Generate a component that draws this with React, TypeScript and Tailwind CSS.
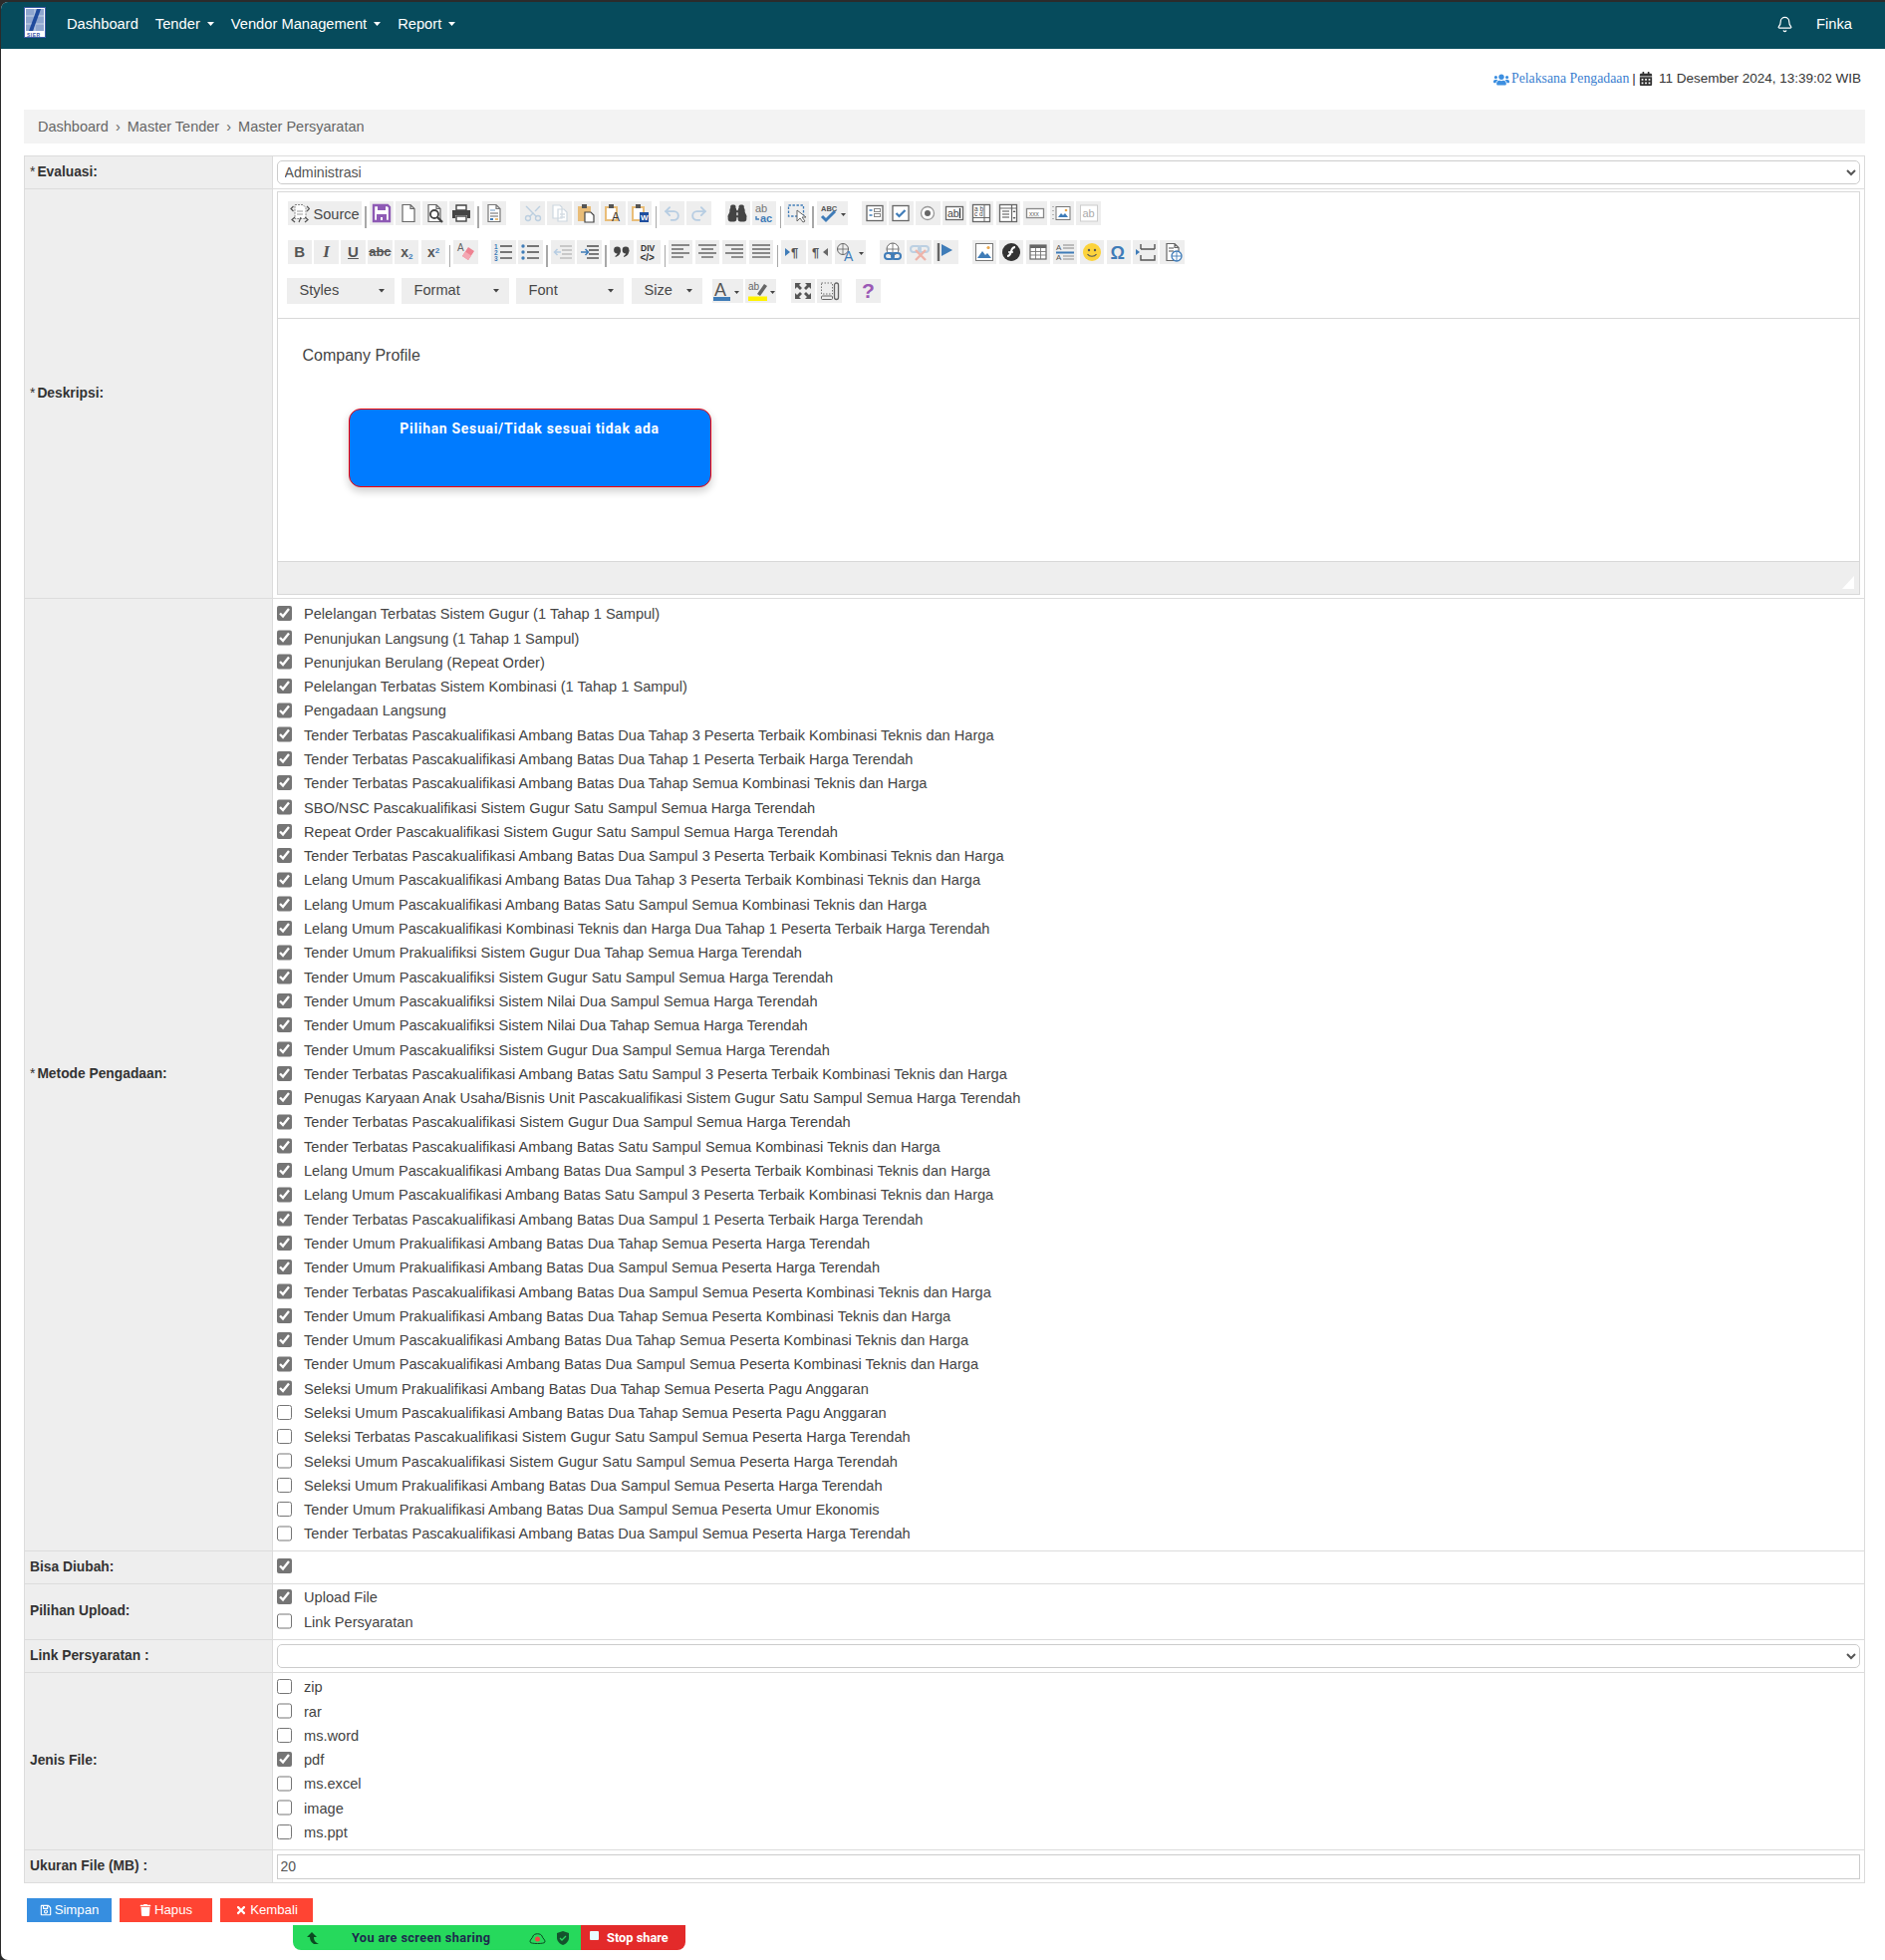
import React from 'react';
import { Bell, Binoculars, Redo2, Scissors, Undo2 } from 'lucide-react';
import { FaCalendarAlt, FaRegSave, FaTimes, FaTrash, FaUsers } from 'react-icons/fa';

const dark = '#4d4d4d';
const blue = '#3f7cb8';
const pale = '#b7cde2';

const metode: [string, boolean][] = [
  ['Pelelangan Terbatas Sistem Gugur (1 Tahap 1 Sampul)', true],
  ['Penunjukan Langsung (1 Tahap 1 Sampul)', true],
  ['Penunjukan Berulang (Repeat Order)', true],
  ['Pelelangan Terbatas Sistem Kombinasi (1 Tahap 1 Sampul)', true],
  ['Pengadaan Langsung', true],
  ['Tender Terbatas Pascakualifikasi Ambang Batas Dua Tahap 3 Peserta Terbaik Kombinasi Teknis dan Harga', true],
  ['Tender Terbatas Pascakualifikasi Ambang Batas Dua Tahap 1 Peserta Terbaik Harga Terendah', true],
  ['Tender Terbatas Pascakualifikasi Ambang Batas Dua Tahap Semua Kombinasi Teknis dan Harga', true],
  ['SBO/NSC Pascakualifikasi Sistem Gugur Satu Sampul Semua Harga Terendah', true],
  ['Repeat Order Pascakualifikasi Sistem Gugur Satu Sampul Semua Harga Terendah', true],
  ['Tender Terbatas Pascakualifikasi Ambang Batas Dua Sampul 3 Peserta Terbaik Kombinasi Teknis dan Harga', true],
  ['Lelang Umum Pascakualifikasi Ambang Batas Dua Tahap 3 Peserta Terbaik Kombinasi Teknis dan Harga', true],
  ['Lelang Umum Pascakualifikasi Ambang Batas Satu Sampul Semua Kombinasi Teknis dan Harga', true],
  ['Lelang Umum Pascakualifikasi Kombinasi Teknis dan Harga Dua Tahap 1 Peserta Terbaik Harga Terendah', true],
  ['Tender Umum Prakualifiksi Sistem Gugur Dua Tahap Semua Harga Terendah', true],
  ['Tender Umum Pascakualifiksi Sistem Gugur Satu Sampul Semua Harga Terendah', true],
  ['Tender Umum Pascakualifiksi Sistem Nilai Dua Sampul Semua Harga Terendah', true],
  ['Tender Umum Pascakualifiksi Sistem Nilai Dua Tahap Semua Harga Terendah', true],
  ['Tender Umum Pascakualifiksi Sistem Gugur Dua Sampul Semua Harga Terendah', true],
  ['Tender Terbatas Pascakualifikasi Ambang Batas Satu Sampul 3 Peserta Terbaik Kombinasi Teknis dan Harga', true],
  ['Penugas Karyaan Anak Usaha/Bisnis Unit Pascakualifikasi Sistem Gugur Satu Sampul Semua Harga Terendah', true],
  ['Tender Terbatas Pascakualifikasi Sistem Gugur Dua Sampul Semua Harga Terendah', true],
  ['Tender Terbatas Pascakualifikasi Ambang Batas Satu Sampul Semua Kombinasi Teknis dan Harga', true],
  ['Lelang Umum Pascakualifikasi Ambang Batas Dua Sampul 3 Peserta Terbaik Kombinasi Teknis dan Harga', true],
  ['Lelang Umum Pascakualifikasi Ambang Batas Satu Sampul 3 Peserta Terbaik Kombinasi Teknis dan Harga', true],
  ['Tender Terbatas Pascakualifikasi Ambang Batas Dua Sampul 1 Peserta Terbaik Harga Terendah', true],
  ['Tender Umum Prakualifikasi Ambang Batas Dua Tahap Semua Peserta Harga Terendah', true],
  ['Tender Umum Prakualifikasi Ambang Batas Dua Sampul Semua Peserta Harga Terendah', true],
  ['Tender Terbatas Pascakualifikasi Ambang Batas Dua Sampul Semua Peserta Kombinasi Teknis dan Harga', true],
  ['Tender Umum Prakualifikasi Ambang Batas Dua Tahap Semua Peserta Kombinasi Teknis dan Harga', true],
  ['Tender Umum Pascakualifikasi Ambang Batas Dua Tahap Semua Peserta Kombinasi Teknis dan Harga', true],
  ['Tender Umum Pascakualifikasi Ambang Batas Dua Sampul Semua Peserta Kombinasi Teknis dan Harga', true],
  ['Seleksi Umum Prakualifikasi Ambang Batas Dua Tahap Semua Peserta Pagu Anggaran', true],
  ['Seleksi Umum Pascakualifikasi Ambang Batas Dua Tahap Semua Peserta Pagu Anggaran', false],
  ['Seleksi Terbatas Pascakualifikasi Sistem Gugur Satu Sampul Semua Peserta Harga Terendah', false],
  ['Seleksi Umum Pascakualifikasi Sistem Gugur Satu Sampul Semua Peserta Harga Terendah', false],
  ['Seleksi Umum Prakualifikasi Ambang Batas Dua Sampul Semua Peserta Harga Terendah', false],
  ['Tender Umum Prakualifikasi Ambang Batas Dua Sampul Semua Peserta Umur Ekonomis', false],
  ['Tender Terbatas Pascakualifikasi Ambang Batas Dua Sampul Semua Peserta Harga Terendah', false],
];

const jenisFile: [string, boolean][] = [
  ['zip', false],
  ['rar', false],
  ['ms.word', false],
  ['pdf', true],
  ['ms.excel', false],
  ['image', false],
  ['ms.ppt', false],
];

const Lines = ({ rows, color = dark }: { rows: number[][]; color?: string }) => (
  <>
    {rows.map(([x1, x2, y], i) => (
      <path key={i} d={`M${x1} ${y}H${x2}`} stroke={color} strokeWidth="1.4" />
    ))}
  </>
);

const Doc = ({ color = dark }: { color?: string }) => (
  <path d="M4 1.5h8l4 4v13H4z M12 1.5v4h4" fill="#fff" stroke={color} strokeWidth="1.2" />
);

const Clip = () => (
  <>
    <rect x="2" y="3" width="13" height="15" fill="#e9bd78" />
    <rect x="6" y="1" width="5" height="4" fill="#555" />
  </>
);

const Svg = ({ children, w = 20 }: { children: React.ReactNode; w?: number }) => (
  <svg width={w} height="20" viewBox={`0 0 ${w} 20`} fontFamily="Liberation Sans, sans-serif">
    {children}
  </svg>
);

const icons: Record<string, React.ReactNode> = {
  save: (
    <Svg>
      <path d="M2 2h14l2 2v14H2z" fill="#fff" stroke="#8e5ab5" strokeWidth="2.4" />
      <rect x="6" y="2" width="8" height="5" fill="#8e5ab5" />
      <rect x="5" y="11" width="10" height="7" fill="#8e5ab5" />
      <rect x="9" y="14" width="2" height="3" fill="#fff" />
    </Svg>
  ),
  newpage: (
    <Svg>
      <Doc color="#666" />
    </Svg>
  ),
  preview: (
    <Svg>
      <Doc color="#666" />
      <circle cx="10" cy="11" r="4" fill="#fff" stroke="#444" strokeWidth="1.8" />
      <path d="M13 14l5 5" stroke="#444" strokeWidth="2.4" />
    </Svg>
  ),
  print: (
    <Svg>
      <path d="M5 2h10v5H5z" fill="#fff" stroke="#444" strokeWidth="1.4" />
      <path d="M1 7h18v8h-3v-3H4v3H1z" fill="#444" />
      <rect x="5" y="13" width="10" height="5" fill="#fff" stroke="#444" strokeWidth="1.4" />
    </Svg>
  ),
  templates: (
    <Svg>
      <Doc color="#777" />
      <rect x="6" y="6" width="5" height="2" fill={pale} />
      <Lines rows={[[6, 14, 10], [6, 14, 13]]} color="#999" />
      <rect x="6" y="15" width="3" height="2" fill={blue} />
      <rect x="11" y="15" width="3" height="2" fill="#e9bd78" />
    </Svg>
  ),
  cut: (
    <span className="flex rotate-[-90deg] text-[#bccfe0]">
      <Scissors size={20} strokeWidth={1.6} />
    </span>
  ),
  copy: (
    <Svg>
      <path d="M3 2h7l2 2v11H3z M8 6h6l3 3v9H8z" fill="#fff" stroke="#cdd7e0" strokeWidth="1.2" />
      <Lines rows={[[10, 15, 11], [10, 15, 14]]} color="#d5dde5" />
    </Svg>
  ),
  paste: (
    <Svg>
      <Clip />
      <path d="M9 9h6l3 3v7H9z" fill="#fff" stroke="#444" strokeWidth="1.2" />
    </Svg>
  ),
  pastetext: (
    <Svg>
      <Clip />
      <rect x="4" y="5" width="9" height="11" fill="#fff" />
      <text x="9" y="18" fontSize="12" fill="#333">A</text>
    </Svg>
  ),
  pasteword: (
    <Svg>
      <Clip />
      <rect x="4" y="5" width="9" height="11" fill="#fff" />
      <rect x="10" y="9" width="9" height="10" fill="#1f4e9e" />
      <text x="11" y="17" fontSize="8" fontWeight="700" fill="#fff">W</text>
    </Svg>
  ),
  undo: (
    <span className="flex text-[#b7cde2]">
      <Undo2 size={19} strokeWidth={2.4} />
    </span>
  ),
  redo: (
    <span className="flex text-[#b7cde2]">
      <Redo2 size={19} strokeWidth={2.4} />
    </span>
  ),
  find: (
    <span className="flex text-[#444]">
      <Binoculars size={20} strokeWidth={2.4} fill="#444" />
    </span>
  ),
  replace: (
    <Svg>
      <text x="1" y="9" fontSize="11" fill="#777">ab</text>
      <text x="6" y="18.500" fontSize="11" fontWeight="700" fill={blue}>ac</text>
      <path d="M2 13v3h3" fill="none" stroke={blue} strokeWidth="1.4" />
    </Svg>
  ),
  selectall: (
    <Svg>
      <rect x="1.5" y="2" width="15" height="11" fill="none" stroke={blue} strokeWidth="1.3" strokeDasharray="2.4 1.6" />
      <path d="M10 7v11l3-3 3 4 2-1-3-4h4z" fill="#fff" stroke="#666" />
    </Svg>
  ),
  spell: (
    <Svg w={29}>
      <text x="3" y="8" fontSize="7.5" fontWeight="700" fill="#555">ABC</text>
      <path d="M4 13l4 4 9-9" fill="none" stroke={blue} strokeWidth="3" />
      <path d="M23 10h5l-2.500 3z" fill="#444" />
    </Svg>
  ),
  form: (
    <Svg>
      <rect x="2" y="2.500" width="16" height="15" fill="#fff" stroke="#666" strokeWidth="1.3" />
      <path d="M4.500 7h3M4.500 12h3" stroke={blue} strokeWidth="1.6" />
      <rect x="9.500" y="5.500" width="6" height="3" fill="none" stroke="#888" />
      <rect x="9.500" y="10.500" width="6" height="3" fill="none" stroke="#888" />
    </Svg>
  ),
  checkbox: (
    <Svg>
      <rect x="2" y="2.500" width="16" height="15" fill="#fff" stroke="#666" strokeWidth="1.3" />
      <path d="M5.500 10l3 3 6-6" fill="none" stroke={blue} strokeWidth="2.2" />
    </Svg>
  ),
  radio: (
    <Svg>
      <circle cx="10" cy="10" r="6.500" fill="#fff" stroke="#999" strokeWidth="1.3" />
      <circle cx="10" cy="10" r="3" fill="#666" />
    </Svg>
  ),
  textfield: (
    <Svg>
      <rect x="1.500" y="3.500" width="17" height="13" fill="#fff" stroke="#666" strokeWidth="1.3" />
      <text x="3" y="14" fontSize="10.500" fill="#444">ab</text>
      <path d="M15.500 5v10" stroke="#333" strokeWidth="1.3" />
    </Svg>
  ),
  textarea: (
    <Svg>
      <rect x="1.500" y="1.500" width="17" height="17" fill="#fff" stroke="#666" strokeWidth="1.3" />
      <text x="3" y="7.500" fontSize="6.500" fill="#444">a b</text>
      <text x="3" y="13" fontSize="6.500" fill="#444">c d</text>
      <path d="M13 2v16M2 14.500h16" stroke="#666" />
    </Svg>
  ),
  select: (
    <Svg>
      <rect x="1.500" y="1.500" width="17" height="17" fill="#fff" stroke="#666" strokeWidth="1.3" />
      <path d="M2 5h16M13.500 2v16" stroke="#666" strokeWidth="1.2" />
      <Lines rows={[[4, 11, 8], [4, 11, 11], [4, 11, 14]]} color="#888" />
      <path d="M14.500 9l1.500-2 1.500 2zM14.500 14l1.500 2 1.500-2z" fill="#555" />
    </Svg>
  ),
  button: (
    <Svg>
      <rect x="1.500" y="5.500" width="17" height="9" fill="#fff" stroke="#888" strokeWidth="1.3" />
      <text x="4" y="12.500" fontSize="6.500" fill="#666">xxx</text>
    </Svg>
  ),
  imagebutton: (
    <Svg>
      <path d="M1 3v1M1 7v1M1 11v1M1 15v1" stroke="#777" />
      <rect x="4" y="3.500" width="14" height="13" fill="#fff" stroke="#777" />
      <path d="M6 14l3-4 2 2 2-2 3 4z" fill={blue} />
      <circle cx="14" cy="7" r="1.300" fill="#e9a64c" />
    </Svg>
  ),
  hidden: (
    <Svg>
      <rect x="1.500" y="2" width="17" height="16" fill="#fff" stroke="#ccc" />
      <text x="3.500" y="14" fontSize="11" fill="#aaa">ab</text>
    </Svg>
  ),
  removeformat: (
    <Svg>
      <text x="1" y="9" fontSize="10" fill="#666">A</text>
      <path d="M12 5l6 4-6 9-6-4z" fill="#ee8291" />
      <path d="M6 14l3-4.500 6 4L12 18z" fill="#f4a7b2" />
    </Svg>
  ),
  ol: (
    <Svg>
      <text x="1" y="7" fontSize="6.500" fontWeight="700" fill={blue}>1</text>
      <text x="1" y="13" fontSize="6.500" fontWeight="700" fill={blue}>2</text>
      <text x="1" y="19" fontSize="6.500" fontWeight="700" fill={blue}>3</text>
      <Lines rows={[[7, 19, 4], [7, 19, 10], [7, 19, 16]]} />
    </Svg>
  ),
  ul: (
    <Svg>
      <circle cx="3" cy="4" r="1.700" fill={blue} />
      <circle cx="3" cy="10" r="1.700" fill={blue} />
      <circle cx="3" cy="16" r="1.700" fill={blue} />
      <Lines rows={[[7, 19, 4], [7, 19, 10], [7, 19, 16]]} />
    </Svg>
  ),
  outdent: (
    <Svg>
      <Lines rows={[[7, 19, 4], [9, 19, 8], [9, 19, 12], [7, 19, 16]]} color="#bbb" />
      <path d="M8 10H2M4.500 7L1.500 10l3 3" fill="none" stroke={pale} strokeWidth="1.500" />
    </Svg>
  ),
  indent: (
    <Svg>
      <Lines rows={[[7, 19, 4], [9, 19, 8], [9, 19, 12], [7, 19, 16]]} />
      <path d="M1 10h7M5.500 7l3 3-3 3" fill="none" stroke={blue} strokeWidth="1.500" />
    </Svg>
  ),
  quote: (
    <Svg>
      <circle cx="5.500" cy="8" r="3.400" fill="#444" />
      <circle cx="14" cy="8" r="3.400" fill="#444" />
      <path d="M8.900 8c0 4-2 6-5 7l-.6-1c2-1 2.700-3 2.700-5zM17.400 8c0 4-2 6-5 7l-.6-1c2-1 2.700-3 2.700-5z" fill="#444" />
    </Svg>
  ),
  div: (
    <Svg>
      <text x="2" y="9" fontSize="8.500" fontWeight="700" fill="#333">DIV</text>
      <text x="1.500" y="18.500" fontSize="10" fontWeight="700" fill="#333">{'</>'}</text>
    </Svg>
  ),
  left: (
    <Svg>
      <Lines rows={[[1, 19, 3], [1, 13, 7], [1, 19, 11], [1, 13, 15]]} color="#666" />
    </Svg>
  ),
  center: (
    <Svg>
      <Lines rows={[[1, 19, 3], [4, 16, 7], [1, 19, 11], [4, 16, 15]]} color="#666" />
    </Svg>
  ),
  right: (
    <Svg>
      <Lines rows={[[1, 19, 3], [7, 19, 7], [1, 19, 11], [7, 19, 15]]} color="#666" />
    </Svg>
  ),
  justify: (
    <Svg>
      <Lines rows={[[1, 19, 3], [1, 19, 7], [1, 19, 11], [1, 19, 15]]} color="#666" />
    </Svg>
  ),
  ltr: (
    <Svg>
      <path d="M2 6l5 4-5 4z" fill={blue} />
      <text x="8" y="15" fontSize="13" fontWeight="700" fill="#555">¶</text>
    </Svg>
  ),
  rtl: (
    <Svg>
      <text x="2" y="15" fontSize="13" fontWeight="700" fill="#555">¶</text>
      <path d="M18 6l-5 4 5 4z" fill="#666" />
    </Svg>
  ),
  lang: (
    <Svg w={29}>
      <circle cx="7" cy="7" r="5.500" fill="none" stroke="#666" />
      <path d="M7 1.500v11M1.500 7h11" stroke="#666" strokeWidth=".8" />
      <text x="8" y="18.500" fontSize="14" fill={blue}>A</text>
      <path d="M23 10h5l-2.500 3z" fill="#444" />
    </Svg>
  ),
  link: (
    <Svg>
      <circle cx="10" cy="7" r="6" fill="#fff" stroke="#666" />
      <path d="M10 1v12M4 7h12" stroke="#666" strokeWidth=".8" />
      <rect x="2" y="11" width="9" height="6" rx="3" fill="none" stroke={blue} strokeWidth="2" />
      <rect x="9" y="11" width="9" height="6" rx="3" fill="none" stroke={blue} strokeWidth="2" />
    </Svg>
  ),
  unlink: (
    <Svg>
      <rect x="1" y="4" width="10" height="6" rx="3" fill="none" stroke="#bcd0e2" strokeWidth="2" />
      <rect x="9" y="4" width="10" height="6" rx="3" fill="none" stroke="#bcd0e2" strokeWidth="2" />
      <path d="M6 8l10 10M16 8L6 18" stroke="#eeb4aa" strokeWidth="2.400" />
    </Svg>
  ),
  anchor: (
    <Svg>
      <path d="M3 1v18" stroke="#666" strokeWidth="2.400" />
      <path d="M6 2l11 6-11 6z" fill={blue} />
    </Svg>
  ),
  image: (
    <Svg>
      <rect x="1.500" y="1.500" width="17" height="17" fill="#fff" stroke="#777" />
      <path d="M3 16l5-7 3 4 2-2 4 5z" fill={blue} />
      <circle cx="14" cy="5.500" r="1.600" fill="#e9a64c" />
    </Svg>
  ),
  flash: (
    <Svg>
      <circle cx="10" cy="10" r="9" fill="#333" />
      <path d="M6 14c3 0 3-2 4-5s2-4 4-4" fill="none" stroke="#fff" strokeWidth="2" />
      <path d="M7 10h5" stroke="#fff" strokeWidth="1.500" />
    </Svg>
  ),
  table: (
    <Svg>
      <rect x="2" y="3" width="16" height="14" fill="#fff" stroke="#666" strokeWidth="1.200" />
      <rect x="2" y="3" width="16" height="3" fill="#666" />
      <path d="M7.500 6v11M12.500 6v11M2 9.500h16M2 13h16" stroke="#777" strokeWidth=".9" />
    </Svg>
  ),
  hr: (
    <Svg>
      <text x="1" y="8" fontSize="8" fill="#555">A</text>
      <text x="1" y="18" fontSize="8" fill="#555">A</text>
      <Lines rows={[[8, 19, 3], [8, 19, 6], [8, 19, 14], [8, 19, 17]]} color="#aaa" />
      <path d="M1 10.500h18" stroke={blue} strokeWidth="2" />
    </Svg>
  ),
  smiley: (
    <Svg>
      <circle cx="10" cy="10" r="9" fill="#fcd33c" />
      <circle cx="7" cy="8" r="1.200" fill="#555" />
      <circle cx="13" cy="8" r="1.200" fill="#555" />
      <path d="M5.500 12c2 3 7 3 9 0" fill="none" stroke="#555" strokeWidth="1.200" />
    </Svg>
  ),
  omega: (
    <Svg>
      <text x="1.500" y="17" fontSize="18" fontWeight="700" fill={blue}>Ω</text>
    </Svg>
  ),
  pagebreak: (
    <Svg>
      <path d="M5 7V2M19 7V2M5 13v5h14v-5" fill="none" stroke="#555" strokeWidth="1.400" />
      <path d="M5 7h14" stroke="#555" strokeWidth="1.400" />
      <path d="M0 7l4 3-4 3z" fill={blue} />
    </Svg>
  ),
  iframe: (
    <Svg>
      <Doc color="#666" />
      <Lines rows={[[6, 11, 6], [6, 11, 9]]} color="#888" />
      <circle cx="14" cy="14" r="5" fill="#fff" stroke={blue} strokeWidth="1.300" />
      <path d="M14 9v10M9 14h10" stroke={blue} strokeWidth=".9" />
    </Svg>
  ),
  fontcolor: (
    <Svg w={28}>
      <text x="1" y="15" fontSize="18" fill="#555">A</text>
      <rect x="0" y="16" width="17" height="4" fill={blue} />
      <path d="M21 10h5l-2.500 3z" fill="#444" />
    </Svg>
  ),
  bgcolor: (
    <Svg w={28}>
      <text x="1" y="9" fontSize="10" fill="#666">ab</text>
      <path d="M10 13l7-10 3 2-7 10z" fill="#666" />
      <rect x="1" y="15.500" width="19" height="4.500" fill="#fff200" />
      <path d="M23 10h5l-2.500 3z" fill="#444" />
    </Svg>
  ),
  maximize: (
    <Svg>
      <path d="M2 2h6L6 4l3 3-2 2-3-3-2 2zM18 2v6l-2-2-3 3-2-2 3-3-2-2zM2 18v-6l2 2 3-3 2 2-3 3 2 2zM18 18h-6l2-2-3-3 2-2 3 3 2-2z" fill="#555" />
    </Svg>
  ),
  showblocks: (
    <Svg>
      <rect x="1.500" y="2" width="11" height="11" fill="none" stroke="#777" strokeDasharray="1.500 1.500" />
      <rect x="1.500" y="15" width="11" height="3.500" rx="1" fill="none" stroke="#666" />
      <rect x="14.500" y="2" width="4" height="16.500" rx="2" fill="none" stroke="#666" strokeWidth="1.300" />
    </Svg>
  ),
  help: <span className="text-[21px] leading-6 font-bold text-[#9b59b6]">?</span>,
};

const Btn = ({ name, wide }: { name: string; wide?: boolean }) => (
  <span
    className={`mr-[2.5px] flex h-6 shrink-0 items-center justify-center bg-[#eeeeee] ${
      wide ? 'w-[31px]' : 'w-[24.4px]'
    }`}
  >
    {icons[name]}
  </span>
);

const TextBtn = ({ children }: { children: React.ReactNode }) => (
  <span className="mr-[2.5px] flex h-6 w-[24.4px] shrink-0 items-center justify-center bg-[#eeeeee] text-[#555]">
    {children}
  </span>
);

const Sep = () => <span className="mt-[4.5px] mr-[3px] ml-px h-[22px] w-[1.5px] shrink-0 bg-[#a8a8a8]" />;
const Gap = ({ narrow }: { narrow?: boolean }) => <span className={`shrink-0 ${narrow ? 'w-[11px]' : 'w-3'}`} />;

const Combo = ({ label, width }: { label: string; width: string }) => (
  <span className={`flex h-[26px] shrink-0 items-center justify-between bg-[#eeeeee] pr-2.5 pl-[13px] text-[14.6px] text-[#484848] ${width}`}>
    {label}
    <svg width="6" height="4" viewBox="0 0 6 4">
      <path d="M0 0h6L3 3.500z" fill="#444" />
    </svg>
  </span>
);

const Check = ({ on }: { on: boolean }) => (
  <input
    type="checkbox"
    checked={on}
    readOnly
    className="m-0 -mt-[3px] h-[15.5px] w-[15.5px] shrink-0 accent-[#757575]"
  />
);

const CheckItem = ({ label, on }: { label: string; on: boolean }) => (
  <label className="flex h-[24.3px] items-center gap-3 text-[14.6px] text-[#444]">
    <Check on={on} />
    <span>{label}</span>
  </label>
);

const Row = ({
  label,
  required,
  children,
}: {
  label: string;
  required?: boolean;
  children: React.ReactNode;
}) => (
  <div className="flex border-b border-[#dcdcdc] last:border-b-0">
    <div className="flex w-[249px] shrink-0 items-center border-r border-[#dcdcdc] bg-[#eeeeee] pl-[5px] text-[13.8px] font-bold text-[#333]">
      {required && <span className="mr-[2px] font-normal">*</span>}
      {label}
    </div>
    <div className="min-w-0 flex-1 pr-[4.5px] pl-[3.5px]">{children}</div>
  </div>
);

const NavItem = ({ label, caret }: { label: string; caret?: boolean }) => (
  <span className="flex items-center gap-[7px] text-white">
    {label}
    {caret && (
      <svg width="7" height="4" viewBox="0 0 7 4">
        <path d="M0 0h7L3.500 4z" fill="#fff" />
      </svg>
    )}
  </span>
);

const App: React.FC = () => {
  return (
    <div className="min-h-[1967px] bg-[#2b2b2b] pt-[2px] pl-px font-['Liberation_Sans',Arial,sans-serif]">
      <div className="min-h-[1965px] overflow-hidden rounded-l-[7px] bg-white">
        <nav className="flex h-[47px] items-center bg-[#064b5c] pr-[33px] pb-[2px] pl-[23px] text-[14.7px]">
          <svg width="22" height="31" viewBox="0 0 22 31" className="mr-[21px] -mt-[4px] shrink-0">
            <rect x=".5" y=".5" width="21" height="30" fill="#fff" stroke="#3b5aa6" />
            <rect x="2" y="2" width="18" height="22" fill="#8fa6cf" />
            <path d="M2 9h18M2 17h18M11 2v22" stroke="#c5d2e6" />
            <path d="M13 2h4L9 24H5z" fill="#1f4a9c" />
            <text x="3" y="29.500" fontSize="5" fontWeight="700" fill="#3b5aa6" letterSpacing=".5">SIER</text>
          </svg>
          <div className="flex items-center gap-[17px]">
            <NavItem label="Dashboard" />
            <NavItem label="Tender" caret />
            <NavItem label="Vendor Management" caret />
            <NavItem label="Report" caret />
          </div>
          <div className="ml-auto flex items-center gap-[23px] text-white">
            <Bell size={17} strokeWidth={1.7} />
            <span>Finka</span>
          </div>
        </nav>

        <div className="flex h-[61px] items-center justify-end pr-[24px] text-[13.5px] text-[#333]">
          <FaUsers className="mr-[2px] text-[16px] text-[#3d8fe0]" />
          <span className="font-['Liberation_Serif',serif] text-[13.8px] text-[#3d7fd0]">Pelaksana Pengadaan</span>
          <span className="mx-[3px]">|</span>
          <FaCalendarAlt className="mr-[6px] -mt-0.5 text-[14px] text-[#333]" />
          <span>11 Desember 2024, 13:39:02 WIB</span>
        </div>

        <div className="mr-5 ml-[23px] flex h-[34px] items-center gap-[7px] bg-[#f3f3f3] pt-px pl-[14px] text-[14.5px] text-[#666]">
          <span>Dashboard</span>
          <span>›</span>
          <span>Master Tender</span>
          <span>›</span>
          <span>Master Persyaratan</span>
        </div>

        <div className="mt-3 mr-5 ml-[23px] border border-[#dcdcdc]">
          <Row label="Evaluasi:" required>
            <div className="flex h-[32px] items-center">
              <select className="h-6 w-full rounded-[5px] border-[1.5px] border-[#cccccc] pl-[3px] text-[14.2px] text-[#555]">
                <option>Administrasi</option>
              </select>
            </div>
          </Row>

          <Row label="Deskripsi:" required>
            <div className="flex h-[410px] flex-col pt-[2px] pb-[3px]">
              <div className="flex flex-1 flex-col border border-[#d8d8d8]">
                <div className="border-b border-[#d8d8d8] px-[10px] pt-[9px] pb-[14px]">
                  <div className="flex h-6 items-start">
                    <span className="mr-[2.5px] flex h-6 w-[74px] shrink-0 items-center gap-1 bg-[#eeeeee] pl-[2px] text-[14.6px] text-[#484848]">
                      <Svg>
                        <path d="M5 1.500h8l3 3v11H5z" fill="#fff" stroke="#888" strokeDasharray="2 1" />
                        <path d="M3.500 3L1 5.500l2.500 2.500M17 3l2.500 2.500L17 8M5 19l-3-2.500L5 14M15 19l3-2.500-3-2.500M9 19l2-5" fill="none" stroke="#555" strokeWidth="1.200" />
                        <path d="M7 8h6M7 11h6" stroke="#999" />
                      </Svg>
                      <span className="pt-[3px]">Source</span>
                    </span>
                    <Sep />
                    <Btn name="save" />
                    <Btn name="newpage" />
                    <Btn name="preview" />
                    <Btn name="print" />
                    <Sep />
                    <Btn name="templates" />
                    <Gap />
                    <Btn name="cut" />
                    <Btn name="copy" />
                    <Btn name="paste" />
                    <Btn name="pastetext" />
                    <Btn name="pasteword" />
                    <Sep />
                    <Btn name="undo" />
                    <Btn name="redo" />
                    <Gap />
                    <Btn name="find" />
                    <Btn name="replace" />
                    <Sep />
                    <Btn name="selectall" />
                    <Sep />
                    <Btn name="spell" wide />
                    <Gap />
                    <Btn name="form" />
                    <Btn name="checkbox" />
                    <Btn name="radio" />
                    <Btn name="textfield" />
                    <Btn name="textarea" />
                    <Btn name="select" />
                    <Btn name="button" />
                    <Btn name="imagebutton" />
                    <Btn name="hidden" />
                  </div>

                  <div className="mt-[15px] flex h-6 items-start">
                    <TextBtn><b className="text-[15px]">B</b></TextBtn>
                    <TextBtn><i className="font-['Liberation_Serif',serif] text-[17px] font-bold">I</i></TextBtn>
                    <TextBtn><u className="text-[15px] font-bold">U</u></TextBtn>
                    <TextBtn><s className="text-[13px] font-bold">abc</s></TextBtn>
                    <TextBtn><b className="text-[14px]">x<sub className="text-[8px] text-[#3f7cb8]">2</sub></b></TextBtn>
                    <TextBtn><b className="text-[14px]">x<sup className="text-[8px] text-[#3f7cb8]">2</sup></b></TextBtn>
                    <Sep />
                    <Btn name="removeformat" />
                    <Gap narrow />
                    <Btn name="ol" />
                    <Btn name="ul" />
                    <Sep />
                    <Btn name="outdent" />
                    <Btn name="indent" />
                    <Sep />
                    <Btn name="quote" />
                    <Btn name="div" />
                    <Sep />
                    <Btn name="left" />
                    <Btn name="center" />
                    <Btn name="right" />
                    <Btn name="justify" />
                    <Sep />
                    <Btn name="ltr" />
                    <Btn name="rtl" />
                    <Btn name="lang" wide />
                    <Gap />
                    <Btn name="link" />
                    <Btn name="unlink" />
                    <Btn name="anchor" />
                    <Gap />
                    <Btn name="image" />
                    <Btn name="flash" />
                    <Btn name="table" />
                    <Btn name="hr" />
                    <Btn name="smiley" />
                    <Btn name="omega" />
                    <Btn name="pagebreak" />
                    <Btn name="iframe" />
                  </div>

                  <div className="mt-[14px] flex items-center">
                    <span className="mr-[7px] -ml-px"><Combo label="Styles" width="w-[108px]" /></span>
                    <span className="mr-[7px]"><Combo label="Format" width="w-[108px]" /></span>
                    <span className="mr-[8px]"><Combo label="Font" width="w-[108px]" /></span>
                    <span className="mr-[10px]"><Combo label="Size" width="w-[71px]" /></span>
                    <Btn name="fontcolor" wide />
                    <Btn name="bgcolor" wide />
                    <Gap />
                    <Btn name="maximize" />
                    <Btn name="showblocks" />
                    <Gap />
                    <Btn name="help" />
                  </div>
                </div>

                <div className="flex-1 pt-[27px] pl-[25px]">
                  <p className="text-[16px] leading-5 text-[#444]">Company Profile</p>
                  <div className="mt-[43px] ml-[46px] h-[79px] w-[364px] rounded-[12px] border-[1.5px] border-[#ff0000] bg-[#007bff] pt-[9px] text-center font-['Roboto',sans-serif] text-[14px] font-bold tracking-[0.68px] text-white shadow-[0_4px_8px_rgba(0,0,0,0.2)]">
                    Pilihan Sesuai/Tidak sesuai tidak ada
                  </div>
                </div>

                <div className="flex h-[33px] items-end justify-end border-t border-[#d8d8d8] bg-[#eeeeee] pr-[5px] pb-[5px]">
                  <svg width="12" height="13" viewBox="0 0 12 13">
                    <path d="M12 0v13H0z" fill="#fff" />
                  </svg>
                </div>
              </div>
            </div>
          </Row>

          <Row label="Metode Pengadaan:" required>
            <div className="pt-1 pb-[3.5px]">
              {metode.map(([label, on]) => (
                <CheckItem key={label} label={label} on={on} />
              ))}
            </div>
          </Row>

          <Row label="Bisa Diubah:">
            <div className="flex h-[32px] items-center">
              <Check on />
            </div>
          </Row>

          <Row label="Pilihan Upload:">
            <div className="pt-[2px] pb-[4.4px]">
              <CheckItem label="Upload File" on />
              <CheckItem label="Link Persyaratan" on={false} />
            </div>
          </Row>

          <Row label="Link Persyaratan :">
            <div className="flex h-[32px] items-center">
              <select className="h-6 w-full rounded-[5px] border-[1.5px] border-[#cccccc] pl-[3px] text-[14.2px] text-[#555]">
                <option></option>
              </select>
            </div>
          </Row>

          <Row label="Jenis File:">
            <div className="pt-[3px] pb-1">
              {jenisFile.map(([label, on]) => (
                <CheckItem key={label} label={label} on={on} />
              ))}
            </div>
          </Row>

          <Row label="Ukuran File (MB) :">
            <div className="flex h-[32px] items-center">
              <input
                readOnly
                value="20"
                className="h-[25px] w-full border-[1.5px] border-[#cccccc] pl-[3px] text-[14px] text-[#555]"
              />
            </div>
          </Row>
        </div>

        <div className="mt-[15px] ml-[26px] flex gap-2 text-[13.2px] text-white">
          <span className="flex h-6 w-[85px] items-center justify-center gap-[3px] bg-[#368ee0]">
            <FaRegSave className="text-[12px]" />
            Simpan
          </span>
          <span className="flex h-6 w-[93px] items-center justify-center gap-[3px] bg-[#ff4433]">
            <FaTrash className="text-[12px]" />
            Hapus
          </span>
          <span className="flex h-6 w-[93px] items-center justify-center gap-[3px] bg-[#ff4433]">
            <FaTimes className="text-[12px]" />
            Kembali
          </span>
        </div>

        <div className="mt-[3px] ml-[293px] flex h-[25px] w-[394px] overflow-hidden rounded-b-[8px] font-['Roboto',sans-serif] text-[12.8px] font-bold">
          <div className="flex w-[289px] items-center bg-[#26d95c] text-[#1d2a4d]">
            <svg width="12" height="12" viewBox="0 0 12 12" className="ml-[14px]">
              <path d="M5 0L0 5h3c0 3 1 5 4 7h5c-4-2-5-4-5-7h3z" fill="#0c4a22" />
            </svg>
            <span className="ml-[33px] tracking-[0.35px]">You are screen sharing</span>
            <svg width="17" height="14" viewBox="0 0 17 14" className="ml-[39px]">
              <path d="M1 11c0-3 2-3 3-6 1-3 8-3 9 0 1 3 3 3 3 6 0 2-15 2-15 0z" fill="none" stroke="#0c4a22" />
              <circle cx="8.500" cy="8" r="2.500" fill="#ef4444" />
            </svg>
            <svg width="12" height="14" viewBox="0 0 12 14" className="ml-[11px]">
              <path d="M6 0l6 2v5c0 3-3 6-6 7-3-1-6-4-6-7V2z" fill="#14532d" />
              <path d="M3 7l2 2 4-4" fill="none" stroke="#26d95c" strokeWidth="1.300" />
            </svg>
          </div>
          <div className="flex flex-1 items-center bg-[#e32a2a] pl-[9px] text-white">
            <span className="mb-[4px] h-[9px] w-[9px] rounded-[1px] bg-[#e8fbff]" />
            <span className="ml-2">Stop share</span>
          </div>
        </div>
      </div>
    </div>
  );
};

export default App;
